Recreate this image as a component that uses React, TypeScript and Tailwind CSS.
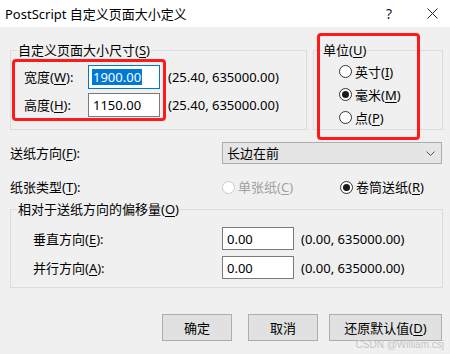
import React from "react";

const U = ({ c }: { c: string }) => (
  <u className="underline underline-offset-[2px] decoration-[1px]">{c}</u>
);

function Radio({ checked, disabled }: { checked?: boolean; disabled?: boolean }) {
  return (
    <span
      className={`w-[13px] h-[13px] shrink-0 rounded-full border bg-white flex items-center justify-center ${
        disabled ? "border-[#cccccc]" : "border-[#333333]"
      }`}
    >
      {checked && <span className="w-[7px] h-[7px] rounded-full bg-[#1a1a1a]" />}
    </span>
  );
}

function Box({ children, focused }: { children: React.ReactNode; focused?: boolean }) {
  return (
    <div
      className={`w-[72px] h-full bg-white border flex items-center pl-[3px] ${
        focused ? "border-[#0078d7]" : "border-[#7a7a7a]"
      }`}
    >
      {children}
    </div>
  );
}

export default function App() {
  return (
    <div className="w-[450px] h-[354px] overflow-hidden bg-[#f0f0f0] text-[13px] leading-[16px] text-black font-['Noto_Sans','Noto_Sans_CJK_SC',sans-serif]">
      {/* Title bar */}
      <div className="h-[27px] bg-white flex items-center pl-[5px]">
        <span className="text-[13px]">PostScript 自定义页面大小定义</span>
        <span className="ml-auto mr-[35px] text-[14px] text-[#222]">?</span>
        <svg className="mr-[12px]" width="11" height="11" viewBox="0 0 11 11">
          <path d="M0.5 0.5 L10.5 10.5 M10.5 0.5 L0.5 10.5" stroke="#222" strokeWidth="1" fill="none" />
        </svg>
      </div>

      {/* Body */}
      <div className="relative h-[327px] pt-[15px] pl-[10px]">
        <div className="flex gap-[6px]">
          <fieldset className="w-[297px] border border-[#dcdcdc] pb-[8px]">
            <legend className="ml-[6px] px-[1px] leading-[16px]">
              自定义页面大小尺寸(<U c="S" />)
            </legend>
            <div className="flex items-start">
              <div className="mt-[1px] ml-[1px] border-[3px] border-[#ff1a1a] rounded-[4px] pl-[9px] pr-[3px] pt-[3px] pb-[1px] flex flex-col gap-[4px]">
                <div className="flex items-center h-[24px]">
                  <span className="w-[64px]">
                    宽度(<U c="W" />):
                  </span>
                  <Box focused>
                    <span className="bg-[#0078d7] text-white px-[1px]">1900.00</span>
                  </Box>
                </div>
                <div className="flex items-center h-[24px]">
                  <span className="w-[64px]">
                    高度(<U c="H" />):
                  </span>
                  <Box>
                    <span className="px-[1px]">1150.00</span>
                  </Box>
                </div>
              </div>
              <div className="ml-[2px] mt-[7px] flex flex-col gap-[4px]">
                <div className="h-[24px] flex items-center">(25.40, 635000.00)</div>
                <div className="h-[24px] flex items-center">(25.40, 635000.00)</div>
              </div>
            </div>
          </fieldset>

          <div className="relative w-[130px] flex">
            <fieldset className="w-[130px] border border-[#dcdcdc]">
              <legend className="ml-[8px] px-[1px] leading-[16px]">
                单位(<U c="U" />)
              </legend>
              <div className="pt-[2px] pl-[25px] flex flex-col">
                <div className="h-[23px] flex items-center gap-[3px]">
                  <Radio />
                  <span>
                    英寸(<U c="I" />)
                  </span>
                </div>
                <div className="h-[23px] flex items-center gap-[3px]">
                  <Radio checked />
                  <span>
                    毫米(<U c="M" />)
                  </span>
                </div>
                <div className="h-[23px] flex items-center gap-[3px]">
                  <Radio />
                  <span>
                    点(<U c="P" />)
                  </span>
                </div>
              </div>
            </fieldset>
            <div className="absolute left-[4px] top-[-9px] w-[103px] h-[107px] border-[3px] border-[#ff1a1a] rounded-[4px] pointer-events-none" />
          </div>
        </div>

        {/* Feed direction */}
        <div className="mt-[12px] h-[22px] flex items-center">
          <span className="w-[212px]">
            送纸方向(<U c="F" />):
          </span>
          <div className="w-[220px] h-[22px] bg-[#e5e5e5] border border-[#adadad] flex items-center pl-[4px] pr-[6px]">
            <span>长边在前</span>
            <svg className="ml-auto" width="9" height="5" viewBox="0 0 9 5">
              <path d="M0.5 0.5 L4.5 4.5 L8.5 0.5" stroke="#555" strokeWidth="1" fill="none" />
            </svg>
          </div>
        </div>

        {/* Paper type */}
        <div className="mt-[12px] h-[22px] flex items-center">
          <span className="w-[212px]">
            纸张类型(<U c="T" />):
          </span>
          <div className="w-[118px] flex items-center gap-[3px] text-[#a0a0a0]">
            <Radio disabled />
            <span>
              单张纸(<U c="C" />)
            </span>
          </div>
          <div className="flex items-center gap-[3px]">
            <Radio checked />
            <span>
              卷筒送纸(<U c="R" />)
            </span>
          </div>
        </div>

        {/* Offset group */}
        <fieldset className="mt-[3px] w-[433px] border border-[#dcdcdc] pb-[8px]">
          <legend className="ml-[6px] px-[1px] leading-[16px]">
            相对于送纸方向的偏移量(<U c="O" />)
          </legend>
          <div className="pt-[10px] pl-[22px] flex flex-col gap-[6px]">
            <div className="h-[23px] flex items-center">
              <span className="w-[189px]">
                垂直方向(<U c="E" />):
              </span>
              <Box>
                <span className="px-[1px]">0.00</span>
              </Box>
              <span className="ml-[7px]">(0.00, 635000.00)</span>
            </div>
            <div className="h-[23px] flex items-center">
              <span className="w-[189px]">
                并行方向(<U c="A" />):
              </span>
              <Box>
                <span className="px-[1px]">0.00</span>
              </Box>
              <span className="ml-[7px]">(0.00, 635000.00)</span>
            </div>
          </div>
        </fieldset>

        {/* Buttons */}
        <div className="mt-[26px] flex">
          <button className="ml-[152px] w-[70px] h-[27px] bg-[#e1e1e1] border border-[#adadad] flex items-center justify-center">
            确定
          </button>
          <button className="ml-[16px] w-[70px] h-[27px] bg-[#e1e1e1] border border-[#adadad] flex items-center justify-center">
            取消
          </button>
          <button className="ml-[11px] w-[113px] h-[27px] bg-[#e1e1e1] border border-[#adadad] flex items-center justify-center">
            还原默认值(<U c="D" />)
          </button>
        </div>

        <div className="absolute right-[6px] bottom-[3px] text-[10px] leading-[12px] text-[#c4c4c4] font-['Liberation_Sans',sans-serif]">
          CSDN @William.csj
        </div>
      </div>
    </div>
  );
}
